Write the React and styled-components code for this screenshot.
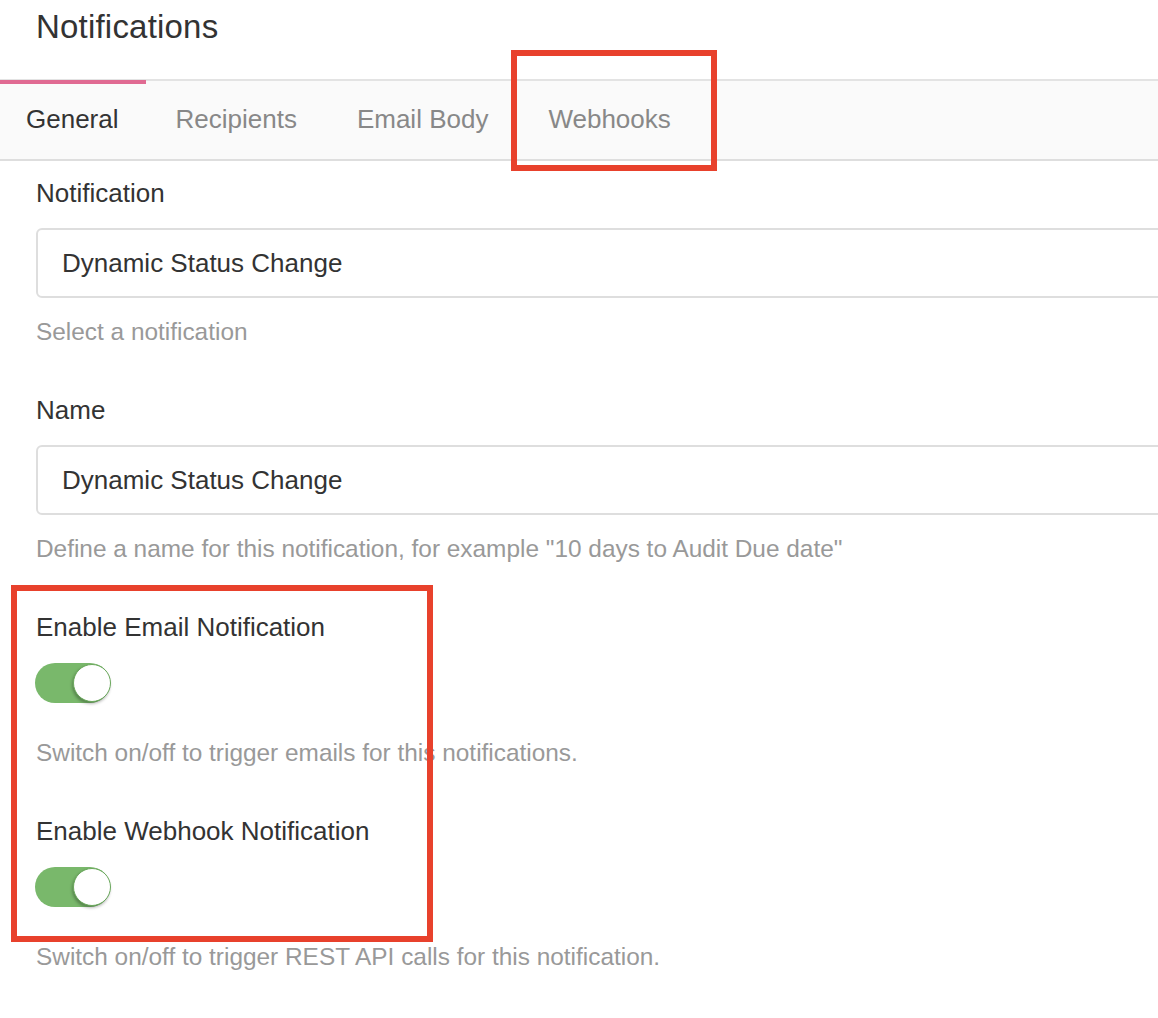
import React from "react";
import styled, { createGlobalStyle } from "styled-components";

const GlobalStyle = createGlobalStyle`
  html, body {
    margin: 0;
    padding: 0;
    background: #ffffff;
    overflow: hidden;
  }
  body {
    font-family: "Liberation Sans", Arial, Helvetica, sans-serif;
    color: #333333;
  }
  * { box-sizing: border-box; }
`;

const Page = styled.div`
  position: relative;
  width: 1400px;
  min-height: 1018px;
`;

const Header = styled.header`
  height: 79px;
  padding: 10px 0 0 36px;
`;

const Title = styled.h1`
  margin: 0;
  font-size: 33px;
  line-height: 33px;
  font-weight: 400;
  color: #333333;
  letter-spacing: 0.2px;
`;

const TabBar = styled.nav`
  display: flex;
  background: #fafafa;
  border-top: 2px solid #e3e3e3;
  border-bottom: 2px solid #dedede;
  height: 82px;
`;

const Tab = styled.div`
  position: relative;
  padding: ${(p) => (p.$first ? "0 27px 2px 26px" : "0 30px 2px 30px")};
  font-size: 26px;
  line-height: 76px;
  color: ${(p) => (p.$active ? "#333333" : "#888888")};
  cursor: pointer;

  &::before {
    content: "";
    display: ${(p) => (p.$active ? "block" : "none")};
    position: absolute;
    left: 0;
    right: 0;
    top: -1px;
    height: 4px;
    background: #e06a92;
  }
`;

const Form = styled.div`
  padding: 17px 0 0 36px;
`;

const Group = styled.div`
  margin-bottom: 49px;
`;

const Label = styled.label`
  display: block;
  font-size: 26px;
  line-height: 30px;
  color: #333333;
  margin-bottom: ${(p) => (p.$toggle ? "21px" : "20px")};
`;

const TextInput = styled.input`
  display: block;
  width: 100%;
  height: 70px;
  padding: 0 24px;
  border: 2px solid #dedede;
  border-radius: 6px;
  background: #ffffff;
  font-family: "Liberation Sans", Arial, sans-serif;
  font-size: 26px;
  color: #333333;
  outline: none;
`;

const Help = styled.p`
  margin: ${(p) => (p.$toggle ? "36px" : "20px")} 0 0;
  font-size: 24.4px;
  line-height: 28px;
  color: #999999;
`;

const Switch = styled.div`
  position: relative;
  width: 75px;
  height: 40px;
  margin-left: -1px;
  border-radius: 20px;
  background: ${(p) => (p.$on ? "#79b86b" : "#d5d5d5")};
`;

const Knob = styled.span`
  position: absolute;
  top: 1px;
  ${(p) => (p.$on ? "right: -1px;" : "left: 1px;")}
  width: 38px;
  height: 38px;
  border-radius: 50%;
  background: #ffffff;
  border: 1px solid #6aa85c;
  box-shadow: -1px 2px 3px rgba(0, 0, 0, 0.28);
`;

const Annotation = styled.div`
  position: absolute;
  border: 6px solid #e8412c;
  pointer-events: none;
`;

const Toggle = ({ on }) => (
  <Switch $on={on}>
    <Knob $on={on} />
  </Switch>
);

const tabs = ["General", "Recipients", "Email Body", "Webhooks"];

export default function App() {
  return (
    <>
      <GlobalStyle />
      <Page>
        <Header>
          <Title>Notifications</Title>
        </Header>
        <TabBar>
          {tabs.map((t, i) => (
            <Tab key={t} $active={i === 0} $first={i === 0}>
              {t}
            </Tab>
          ))}
        </TabBar>
        <Form>
          <Group>
            <Label>Notification</Label>
            <TextInput readOnly value="Dynamic Status Change" />
            <Help>Select a notification</Help>
          </Group>
          <Group>
            <Label>Name</Label>
            <TextInput readOnly value="Dynamic Status Change" />
            <Help>
              Define a name for this notification, for example "10 days to Audit Due date"
            </Help>
          </Group>
          <Group>
            <Label $toggle>Enable Email Notification</Label>
            <Toggle on />
            <Help $toggle>Switch on/off to trigger emails for this notifications.</Help>
          </Group>
          <Group>
            <Label $toggle>Enable Webhook Notification</Label>
            <Toggle on />
            <Help $toggle>Switch on/off to trigger REST API calls for this notification.</Help>
          </Group>
        </Form>
        <Annotation style={{ left: 511, top: 50, width: 206, height: 121 }} />
        <Annotation style={{ left: 11, top: 585, width: 422, height: 357 }} />
      </Page>
    </>
  );
}
